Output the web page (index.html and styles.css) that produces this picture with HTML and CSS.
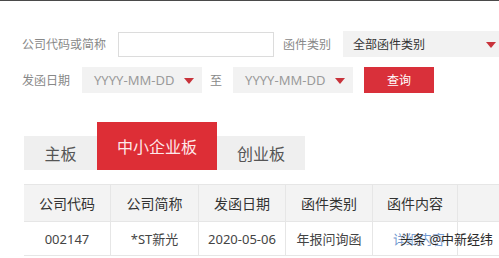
FILE: index.html
```html
<!DOCTYPE html>
<html lang="zh-CN">
<head>
<meta charset="utf-8">
<title>函件查询</title>
<link rel="stylesheet" href="styles.css">
</head>
<body>
<div class="page">
  <form class="search">
    <div class="row row-1">
      <span class="label">公司代码或简称</span>
      <input class="text-input" type="text">
      <span class="label label-2">函件类别</span>
      <div class="select select-type">
        <span>全部函件类别</span>
        <span class="arrow"></span>
      </div>
    </div>
    <div class="row row-2">
      <span class="label">发函日期</span>
      <div class="select date">
        <span class="placeholder">YYYY-MM-DD</span>
        <span class="arrow"></span>
      </div>
      <span class="to">至</span>
      <div class="select date">
        <span class="placeholder">YYYY-MM-DD</span>
        <span class="arrow"></span>
      </div>
      <button class="btn" type="button">查询</button>
    </div>
  </form>

  <div class="tabs">
    <div class="tab tab-main">主板</div>
    <div class="tab tab-active">中小企业板</div>
    <div class="tab tab-gem">创业板</div>
  </div>

  <table class="grid">
    <thead>
      <tr>
        <th class="c1">公司代码</th>
        <th class="c2">公司简称</th>
        <th class="c3">发函日期</th>
        <th class="c4">函件类别</th>
        <th class="c5">函件内容</th>
        <th class="c6"></th>
      </tr>
    </thead>
    <tbody>
      <tr>
        <td>002147</td>
        <td>*ST新光</td>
        <td>2020-05-06</td>
        <td>年报问询函</td>
        <td class="cell-link"><a class="link">详细内容</a></td>
        <td></td>
      </tr>
    </tbody>
  </table>

  <div class="watermark">头条 @中新经纬</div>
</div>
</body>
</html>
```

FILE: styles.css
```css
html, body {
  margin: 0;
  padding: 0;
  background: #fff;
  overflow: hidden;
}

.page {
  position: relative;
  width: 499px;
  height: 258px;
  overflow: hidden;
  border-top: 1px solid #4a4a4a;
  box-sizing: border-box;
  font-family: "Noto Sans", "Noto Sans CJK SC", sans-serif;
  color: #333;
}

.search {
  padding: 30px 0 0 22px;
  margin: 0;
}

.row {
  display: flex;
  align-items: center;
  height: 26px;
}

.row-2 {
  margin-top: 10px;
}

.label {
  font-size: 12px;
  color: #888;
  margin-right: 12px;
  white-space: nowrap;
}

.label-2 {
  margin-left: 9px;
}

.text-input {
  width: 156px;
  height: 25px;
  box-sizing: border-box;
  border: 1px solid #dcdcdc;
  background: #fff;
  padding: 0;
  margin: 0;
}

.select {
  display: flex;
  align-items: center;
  justify-content: space-between;
  height: 26px;
  box-sizing: border-box;
  background: #f2f2f2;
  font-size: 12px;
  color: #333;
  white-space: nowrap;
  flex-shrink: 0;
}

.select-type {
  width: 160px;
  padding: 0 7px 0 10px;
}

.date {
  width: 120px;
  padding: 0 8px 0 12px;
}

.placeholder {
  font-size: 13px;
  color: #9a9a9a;
}

.arrow {
  width: 0;
  height: 0;
  border-left: 5px solid transparent;
  border-right: 5px solid transparent;
  border-top: 6px solid #c8333b;
  margin-top: 1px;
}

.to {
  font-size: 12px;
  color: #888;
  margin: 0 11px 0 8px;
}

.btn {
  margin-left: 11px;
  width: 70px;
  height: 26px;
  border: 0;
  padding: 0;
  background: #d9303a;
  color: #fff;
  font-family: inherit;
  font-size: 12px;
}

.tabs {
  display: flex;
  align-items: flex-end;
  margin: 29px 0 0 24px;
  height: 48px;
}

.tab {
  height: 34px;
  display: flex;
  align-items: center;
  justify-content: center;
  background: #efefef;
  font-size: 16px;
  color: #555;
}

.tab-main { width: 73px; }

.tab-active {
  width: 120px;
  height: 48px;
  background: #dd2e36;
  color: #fde9ea;
}

.tab-gem { width: 88px; }

.grid {
  margin: 14px 0 0 24px;
  border-collapse: collapse;
  table-layout: fixed;
  width: 540px;
}

.grid th,
.grid td {
  border: 1px solid #e6e6e6;
  text-align: center;
  padding: 0;
  white-space: nowrap;
  overflow: hidden;
}

.grid th {
  height: 36px;
  background: #f3f3f3;
  font-size: 14px;
  font-weight: normal;
  color: #333;
}

.grid td {
  height: 33px;
  font-size: 13px;
  color: #444;
}

.grid tr > :first-child { border-left: 0; }

.c1 { width: 86px; }
.c2 { width: 87px; }
.c3 { width: 86px; }
.c4 { width: 86px; }
.c5 { width: 84px; }

.cell-link {
  text-align: left;
  padding-left: 20px;
}

.grid td.cell-link {
  padding-left: 20px;
  text-align: left;
}

.link {
  color: #6f97cf;
}

.watermark {
  position: absolute;
  left: 400px;
  top: 228px;
  font-size: 13px;
  color: #2a2a2a;
  text-shadow: 0 0 2px #fff, 0 0 2px #fff;
  white-space: nowrap;
}
```
